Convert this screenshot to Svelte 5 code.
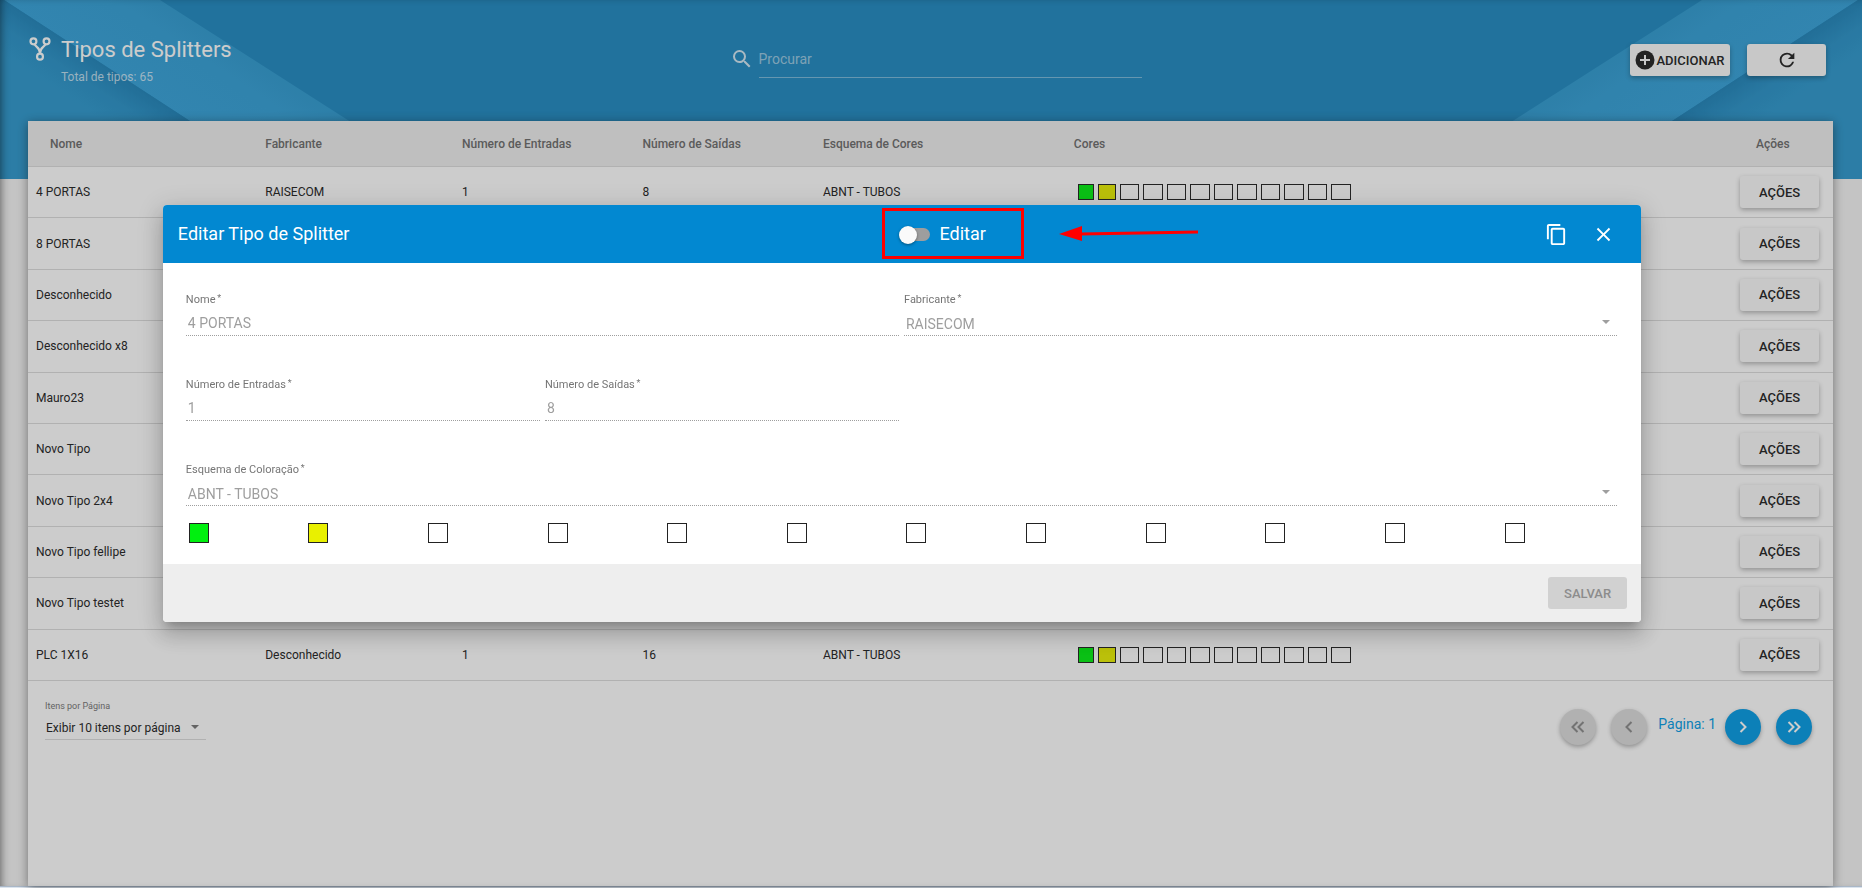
<script>
	const green = '#00f00f';
	const yellow = '#e9f000';

	const colors = [green, yellow, ...Array(10).fill('transparent')];

	const splitters = [
		{ name: '4 PORTAS', maker: 'RAISECOM', inputs: 1, outputs: 8, scheme: 'ABNT - TUBOS', colors },
		{ name: '8 PORTAS' },
		{ name: 'Desconhecido' },
		{ name: 'Desconhecido x8' },
		{ name: 'Mauro23' },
		{ name: 'Novo Tipo' },
		{ name: 'Novo Tipo 2x4' },
		{ name: 'Novo Tipo fellipe' },
		{ name: 'Novo Tipo testet' },
		{ name: 'PLC 1X16', maker: 'Desconhecido', inputs: 1, outputs: 16, scheme: 'ABNT - TUBOS', colors },
	];

	let search = $state('');
	let editing = $state(false);
	let open = $state(true);
	let form = $state({ name: '4 PORTAS', maker: 'RAISECOM', inputs: '1', outputs: '8', scheme: 'ABNT - TUBOS' });
</script>

{#snippet stripes(side)}
	<svg class="stripes {side}" viewBox="0 0 420 179" aria-hidden="true">
		<defs>
			<linearGradient id="band-{side}" gradientUnits="userSpaceOnUse" x1="100" y1="70" x2="166" y2="-30">
				<stop offset="0" stop-color="#35a2da" />
				<stop offset="0.5" stop-color="#33a0d7" />
				<stop offset="1" stop-color="#2c97cd" />
			</linearGradient>
			<linearGradient id="corner-{side}" gradientUnits="userSpaceOnUse" x1="98" y1="60" x2="71" y2="101">
				<stop offset="0" stop-color="#1f83b9" />
				<stop offset="0.5" stop-color="#2992c8" />
				<stop offset="1" stop-color="#2d98ce" />
			</linearGradient>
		</defs>
		<path d="M4 0H160L440 179H279Z" fill="url(#band-{side})" />
		<path d="M0 0H4L279 179H0Z" fill="url(#corner-{side})" />
	</svg>
{/snippet}

{#snippet chevrons(path)}
	<svg viewBox="0 0 24 24" aria-hidden="true"><path d={path} /></svg>
{/snippet}

{#snippet caret()}
	<svg class="caret" viewBox="0 0 8 4" aria-hidden="true"><path d="M0 0H8L4 4Z" /></svg>
{/snippet}

<div class="page">
	<div class="banner">
		{@render stripes('left')}
		{@render stripes('right')}
	</div>

	<header class="top">
		<div class="heading">
			<svg class="fork" viewBox="0 0 20 22" aria-hidden="true">
				<circle cx="4" cy="4" r="2.7" />
				<circle cx="16" cy="4" r="2.7" />
				<circle cx="10" cy="18" r="2.7" />
				<path d="M5 6.5C6 9.5 10 9.5 10 15M15 6.5C14 9.5 10 9.5 10 15" />
			</svg>
			<div>
				<h1>Tipos de Splitters</h1>
				<p>Total de tipos: 65</p>
			</div>
		</div>

		<div class="search">
			<svg viewBox="0 0 24 24" aria-hidden="true">
				<path d="M15.5 14h-.79l-.28-.27A6.471 6.471 0 0 0 16 9.5 6.5 6.5 0 1 0 9.5 16c1.61 0 3.09-.59 4.23-1.57l.27.28v.79l5 4.99L20.49 19l-4.99-5zm-6 0C7.01 14 5 11.99 5 9.5S7.01 5 9.5 5 14 7.01 14 9.5 11.99 14 9.5 14z" />
			</svg>
			<input type="text" placeholder="Procurar" aria-label="Procurar" bind:value={search} />
		</div>

		<div class="tools">
			<button class="btn add" type="button">
				<svg viewBox="0 0 20 20" aria-hidden="true">
					<circle cx="10" cy="10" r="9.5" />
					<path d="M10 5V15M5 10H15" />
				</svg>
				ADICIONAR
			</button>
			<button class="btn" type="button" aria-label="Atualizar">
				<svg class="refresh" viewBox="0 0 24 24" aria-hidden="true">
					<path d="M17.65 6.35A7.958 7.958 0 0 0 12 4a8 8 0 1 0 7.73 10h-2.08A5.99 5.99 0 0 1 12 18a6 6 0 1 1 0-12c1.66 0 3.14.69 4.22 1.78L13 11h7V4l-2.35 2.35z" />
				</svg>
			</button>
		</div>
	</header>

	<main class="card">
		<table>
			<thead>
				<tr>
					<th class="c-name">Nome</th>
					<th class="c-maker">Fabricante</th>
					<th class="c-in">Número de Entradas</th>
					<th class="c-out">Número de Saídas</th>
					<th class="c-scheme">Esquema de Cores</th>
					<th>Cores</th>
					<th class="c-actions">Ações</th>
				</tr>
			</thead>
			<tbody>
				{#each splitters as row}
					<tr>
						<td>{row.name}</td>
						<td>{row.maker ?? ''}</td>
						<td>{row.inputs ?? ''}</td>
						<td>{row.outputs ?? ''}</td>
						<td>{row.scheme ?? ''}</td>
						<td>
							{#if row.colors}
								<div class="swatches">
									{#each row.colors as color}
										<span style:background={color}></span>
									{/each}
								</div>
							{/if}
						</td>
						<td><button class="btn" type="button">AÇÕES</button></td>
					</tr>
				{/each}
			</tbody>
		</table>

		<div class="paging">
			<div class="per-page">
				<label for="per-page">Itens por Página</label>
				<div class="select">
					<select id="per-page">
						<option>Exibir 10 itens por página</option>
					</select>
					{@render caret()}
				</div>
			</div>
			<nav class="pager" aria-label="Paginação">
				<button type="button" disabled aria-label="Primeira página">
					{@render chevrons('M11.5 7L6.5 12L11.5 17M17.5 7L12.5 12L17.5 17')}
				</button>
				<button type="button" disabled aria-label="Página anterior">
					{@render chevrons('M14.5 7L9.5 12L14.5 17')}
				</button>
				<span>Página: 1</span>
				<button type="button" aria-label="Próxima página">
					{@render chevrons('M9.5 7L14.5 12L9.5 17')}
				</button>
				<button type="button" aria-label="Última página">
					{@render chevrons('M6.5 7L11.5 12L6.5 17M12.5 7L17.5 12L12.5 17')}
				</button>
			</nav>
		</div>
	</main>
	<div class="edge"></div>
</div>

{#if open}
	<div class="backdrop">
		<div class="dialog" role="dialog" aria-labelledby="dialog-title">
			<div class="dialog-head">
				<h2 id="dialog-title">Editar Tipo de Splitter</h2>
				<div class="dialog-tools">
					<label class="switch">
						<input type="checkbox" bind:checked={editing} />
						<span class="track"></span>
						Editar
					</label>
					<button type="button" aria-label="Copiar">
						<svg viewBox="0 0 24 24" aria-hidden="true">
							<path d="M16 1H4c-1.1 0-2 .9-2 2v14h2V3h12V1zm3 4H8c-1.1 0-2 .9-2 2v14c0 1.1.9 2 2 2h11c1.1 0 2-.9 2-2V7c0-1.1-.9-2-2-2zm0 16H8V7h11v14z" />
						</svg>
					</button>
					<button type="button" aria-label="Fechar" onclick={() => (open = false)}>
						<svg viewBox="0 0 24 24" aria-hidden="true">
							<path d="M19 6.41L17.59 5 12 10.59 6.41 5 5 6.41 10.59 12 5 17.59 6.41 19 12 13.41 17.59 19 19 17.59 13.41 12z" />
						</svg>
					</button>
				</div>
				<div class="callout"></div>
				<svg class="arrow" viewBox="0 0 142 18" aria-hidden="true">
					<path d="M22 10L140 8" />
					<polygon points="1,10 24,2 24,17" />
				</svg>
			</div>

			<div class="dialog-body">
				<div class="field half">
					<label for="name">Nome <sup>*</sup></label>
					<input id="name" type="text" disabled={!editing} bind:value={form.name} />
				</div>
				<div class="field half">
					<label for="maker">Fabricante <sup>*</sup></label>
					<div class="select">
						<select id="maker" disabled={!editing} bind:value={form.maker}>
							<option>RAISECOM</option>
							<option>Desconhecido</option>
						</select>
						{@render caret()}
					</div>
				</div>
				<div class="field">
					<label for="inputs">Número de Entradas <sup>*</sup></label>
					<input id="inputs" type="text" disabled={!editing} bind:value={form.inputs} />
				</div>
				<div class="field">
					<label for="outputs">Número de Saídas <sup>*</sup></label>
					<input id="outputs" type="text" disabled={!editing} bind:value={form.outputs} />
				</div>
				<div class="field full">
					<label for="scheme">Esquema de Coloração <sup>*</sup></label>
					<div class="select">
						<select id="scheme" disabled={!editing} bind:value={form.scheme}>
							<option>ABNT - TUBOS</option>
						</select>
						{@render caret()}
					</div>
				</div>
				<div class="palette">
					{#each colors as color}
						<span style:background={color}></span>
					{/each}
				</div>
			</div>

			<div class="dialog-foot">
				<button class="btn save" type="button" disabled={!editing}>SALVAR</button>
			</div>
		</div>
	</div>
{/if}

<style>
	:global(body) {
		font-family: Roboto, 'Liberation Sans', sans-serif;
		font-size: 12px;
		color: #212121;
		background: #f5f5f5;
	}
	h1,
	h2,
	p {
		margin: 0;
		font-weight: 400;
	}
	button,
	input,
	select {
		font-family: inherit;
		margin: 0;
		box-sizing: border-box;
	}

	.page {
		position: relative;
		display: flex;
		flex-direction: column;
		min-height: 100vh;
		box-sizing: border-box;
	}
	.banner {
		position: absolute;
		top: 0;
		left: 0;
		right: 0;
		height: 179px;
		background: #1f89c1;
		overflow: hidden;
	}
	.stripes {
		position: absolute;
		top: 0;
		left: 0;
		width: 420px;
		height: 179px;
	}
	.stripes.right {
		left: auto;
		right: 0;
		transform: scaleX(-1);
	}

	/* Title bar */
	.top {
		position: relative;
		display: grid;
		grid-template-columns: 1fr 412px 1fr;
		height: 121px;
		padding: 0 20px 0 29px;
		color: #fff;
	}
	.heading {
		display: flex;
		gap: 10px;
		padding-top: 37px;
	}
	.fork {
		width: 22px;
		height: 24px;
		fill: none;
		stroke: #fff;
		stroke-width: 2;
	}
	h1 {
		font-size: 22px;
		line-height: 26px;
	}
	.heading p {
		margin-top: 7px;
		line-height: 14px;
		color: rgba(255, 255, 255, 0.7);
	}
	.search {
		display: flex;
		gap: 5px;
		padding-top: 41px;
	}
	.search svg {
		width: 24px;
		height: 24px;
		margin-top: 6px;
		fill: rgba(255, 255, 255, 0.8);
	}
	.search input {
		flex: 1;
		height: 37px;
		padding: 0;
		border: 0;
		border-bottom: 1px solid rgba(255, 255, 255, 0.4);
		background: none;
		font-size: 14px;
		color: #fff;
		outline: 0;
	}
	.search input::placeholder {
		color: rgba(255, 255, 255, 0.55);
	}
	.tools {
		display: flex;
		justify-content: flex-end;
		align-items: flex-start;
		gap: 17px;
		padding: 44px 16px 0 0;
	}
	.btn {
		display: inline-flex;
		align-items: center;
		justify-content: center;
		width: 79px;
		height: 32px;
		padding: 0;
		border: 0;
		border-radius: 3px;
		background: #fafafa;
		color: #212121;
		font-size: 13px;
		font-weight: 500;
		box-shadow: 0 2px 5px rgba(0, 0, 0, 0.3);
		cursor: pointer;
	}
	.btn.add {
		width: 100px;
	}
	.add svg {
		width: 20px;
		height: 20px;
		margin-right: 1px;
		fill: #212121;
		stroke: #fafafa;
		stroke-width: 2;
	}
	.add circle {
		stroke: none;
	}
	.refresh {
		width: 22px;
		height: 22px;
		fill: #212121;
	}

	/* List */
	.card {
		position: relative;
		flex: 1;
		margin: 0 29px 0 28px;
		background: #fff;
		box-shadow: 0 2px 10px rgba(0, 0, 0, 0.45);
	}
	table {
		width: 100%;
		height: 560px;
		table-layout: fixed;
		border-collapse: separate;
		border-spacing: 0;
	}
	th,
	td {
		box-sizing: border-box;
		padding: 0 0 0 8px;
		text-align: left;
		border-bottom: 1px solid #dcdcdc;
	}
	th {
		height: 46px;
		background: #eee;
		color: #6b6b6b;
		font-weight: 500;
	}
	.c-name {
		width: 12.7%;
		padding-left: 22px;
	}
	.c-maker {
		width: 10.9%;
	}
	.c-in,
	.c-out {
		width: 10%;
	}
	.c-scheme {
		width: 13.9%;
	}
	.c-actions {
		width: 101px;
		padding-left: 24px;
	}
	.swatches {
		display: flex;
		gap: 4px;
		width: 273px;
		margin-left: 4px;
	}
	.swatches span {
		flex: 1;
		height: 16px;
		box-sizing: border-box;
		border: 1px solid #222;
	}
	.swatches span:first-child {
		flex: 0 0 16px;
	}
	.swatches span:nth-child(2) {
		flex: 0 0 18px;
	}
	.paging {
		display: flex;
		justify-content: space-between;
		padding: 18px 21px 0 17px;
	}
	.per-page {
		width: 161px;
	}
	.per-page label {
		display: block;
		font-size: 9px;
		line-height: 14px;
		color: #757575;
	}
	.select {
		display: grid;
		align-items: center;
	}
	.select > :global(*) {
		grid-area: 1 / 1;
	}
	.caret {
		width: 8px;
		height: 4px;
		justify-self: end;
		margin-right: 7px;
		fill: #757575;
		pointer-events: none;
	}
	select {
		width: 100%;
		appearance: none;
		border: 0;
		border-radius: 0;
		background: none;
		outline: 0;
	}
	.per-page select {
		height: 27px;
		padding: 3px 20px 0 1px;
		border-bottom: 1px solid #dcdcdc;
		font-size: 12px;
		color: #212121;
	}
	.pager {
		display: flex;
		gap: 15px;
		padding-top: 10px;
	}
	.pager button {
		display: flex;
		align-items: center;
		justify-content: center;
		width: 36px;
		height: 36px;
		padding: 0;
		border: 0;
		border-radius: 50%;
		background: #039be5;
		box-shadow: 0 2px 4px rgba(0, 0, 0, 0.3);
	}
	.pager button:disabled {
		background: #dcdcdc;
	}
	.pager svg {
		width: 24px;
		height: 24px;
		fill: none;
		stroke: #fff;
		stroke-width: 2;
	}
	.pager button:disabled svg {
		stroke: #8a8a8a;
	}
	.pager span {
		margin: 0 -6px 0 -4px;
		font-size: 14px;
		line-height: 30px;
		color: #039be5;
	}
	.edge {
		height: 1px;
		border-top: 1px solid #a9b7c7;
		background: #dbe4ee;
	}

	/* Edit dialog */
	.backdrop {
		position: fixed;
		inset: 0 0 2px;
		display: flex;
		align-items: center;
		justify-content: center;
		padding: 0 58px 59px 0;
		background: rgba(40, 40, 40, 0.24);
		box-shadow: inset 6px 1px 8px -5px rgba(0, 0, 0, 0.5);
	}
	.dialog {
		width: calc(82% - 1px);
		border-radius: 4px;
		background: #fff;
		box-shadow: 0 7px 8px -4px rgba(0, 0, 0, 0.2), 0 13px 19px 2px rgba(0, 0, 0, 0.14), 0 5px 24px 4px rgba(0, 0, 0, 0.12);
	}
	.dialog-head {
		position: relative;
		display: grid;
		grid-template-columns: 1fr 1fr;
		align-items: center;
		height: 58px;
		padding: 0 26px 0 15px;
		border-radius: 4px 4px 0 0;
		background: #0288d1;
		color: #fff;
	}
	h2,
	.switch {
		font-size: 18px;
		line-height: 24px;
	}
	.switch {
		display: flex;
		align-items: center;
		gap: 9px;
		margin-right: auto;
	}
	.switch input {
		position: absolute;
		opacity: 0;
	}
	.track {
		position: relative;
		width: 28px;
		height: 13px;
		margin-left: 6px;
		border-radius: 7px;
		background: #9e9e9e;
	}
	.track::before {
		content: '';
		position: absolute;
		top: -2px;
		left: -3px;
		width: 18px;
		height: 18px;
		border-radius: 50%;
		background: #fafafa;
		box-shadow: 0 1px 3px rgba(0, 0, 0, 0.4);
	}
	.switch input:checked + .track::before {
		left: 13px;
	}
	.dialog-tools {
		display: flex;
		align-items: center;
		gap: 24px;
	}
	.dialog-tools button {
		width: 23px;
		height: 23px;
		padding: 0;
		border: 0;
		background: none;
	}
	.dialog-tools svg {
		display: block;
		width: 23px;
		height: 23px;
		fill: #fff;
	}
	.callout {
		position: absolute;
		top: 3px;
		left: calc(50% - 20px);
		width: 142px;
		height: 51px;
		box-sizing: border-box;
		border: 3px solid #f00;
		pointer-events: none;
	}
	.arrow {
		position: absolute;
		top: 19px;
		left: calc(50% + 156px);
		width: 142px;
		height: 18px;
		fill: #f00;
	}
	.arrow path {
		stroke: #f00;
		stroke-width: 3;
	}
	.dialog-body {
		display: grid;
		grid-template-columns: repeat(4, 1fr);
		gap: 34px 5px;
		padding: 22px 24px 21px 23px;
	}
	.field.half {
		grid-column: span 2;
	}
	.field.full {
		grid-column: span 4;
	}
	.field label {
		display: block;
		font-size: 11px;
		line-height: 16px;
		padding-top: 7px;
		color: #757575;
	}
	sup {
		margin-left: -1px;
		font-size: 9px;
		line-height: 1;
		vertical-align: 2px;
	}
	.field input,
	.field select {
		width: 100%;
		height: 28px;
		padding: 2px 2px 0;
		border: 0;
		border-bottom: 1px dotted #9e9e9e;
		background: none;
		font-size: 14px;
		color: #9e9e9e;
		opacity: 1;
	}
	.field select {
		padding-top: 4px;
	}
	.field .caret {
		fill: #9e9e9e;
	}
	.palette {
		grid-column: span 4;
		display: grid;
		grid-template-columns: repeat(12, 1fr);
		gap: 4px;
		margin-top: -17px;
	}
	.palette span {
		width: 20px;
		height: 20px;
		margin-left: 3px;
		box-sizing: border-box;
		border: 1px solid #222;
	}
	.dialog-foot {
		display: flex;
		justify-content: flex-end;
		align-items: center;
		height: 58px;
		padding-right: 14px;
		border-radius: 0 0 4px 4px;
		background: #eee;
	}
	.save:disabled {
		background: #d1d1d1;
		color: #8c8c8c;
		box-shadow: none;
		cursor: default;
	}
</style>
